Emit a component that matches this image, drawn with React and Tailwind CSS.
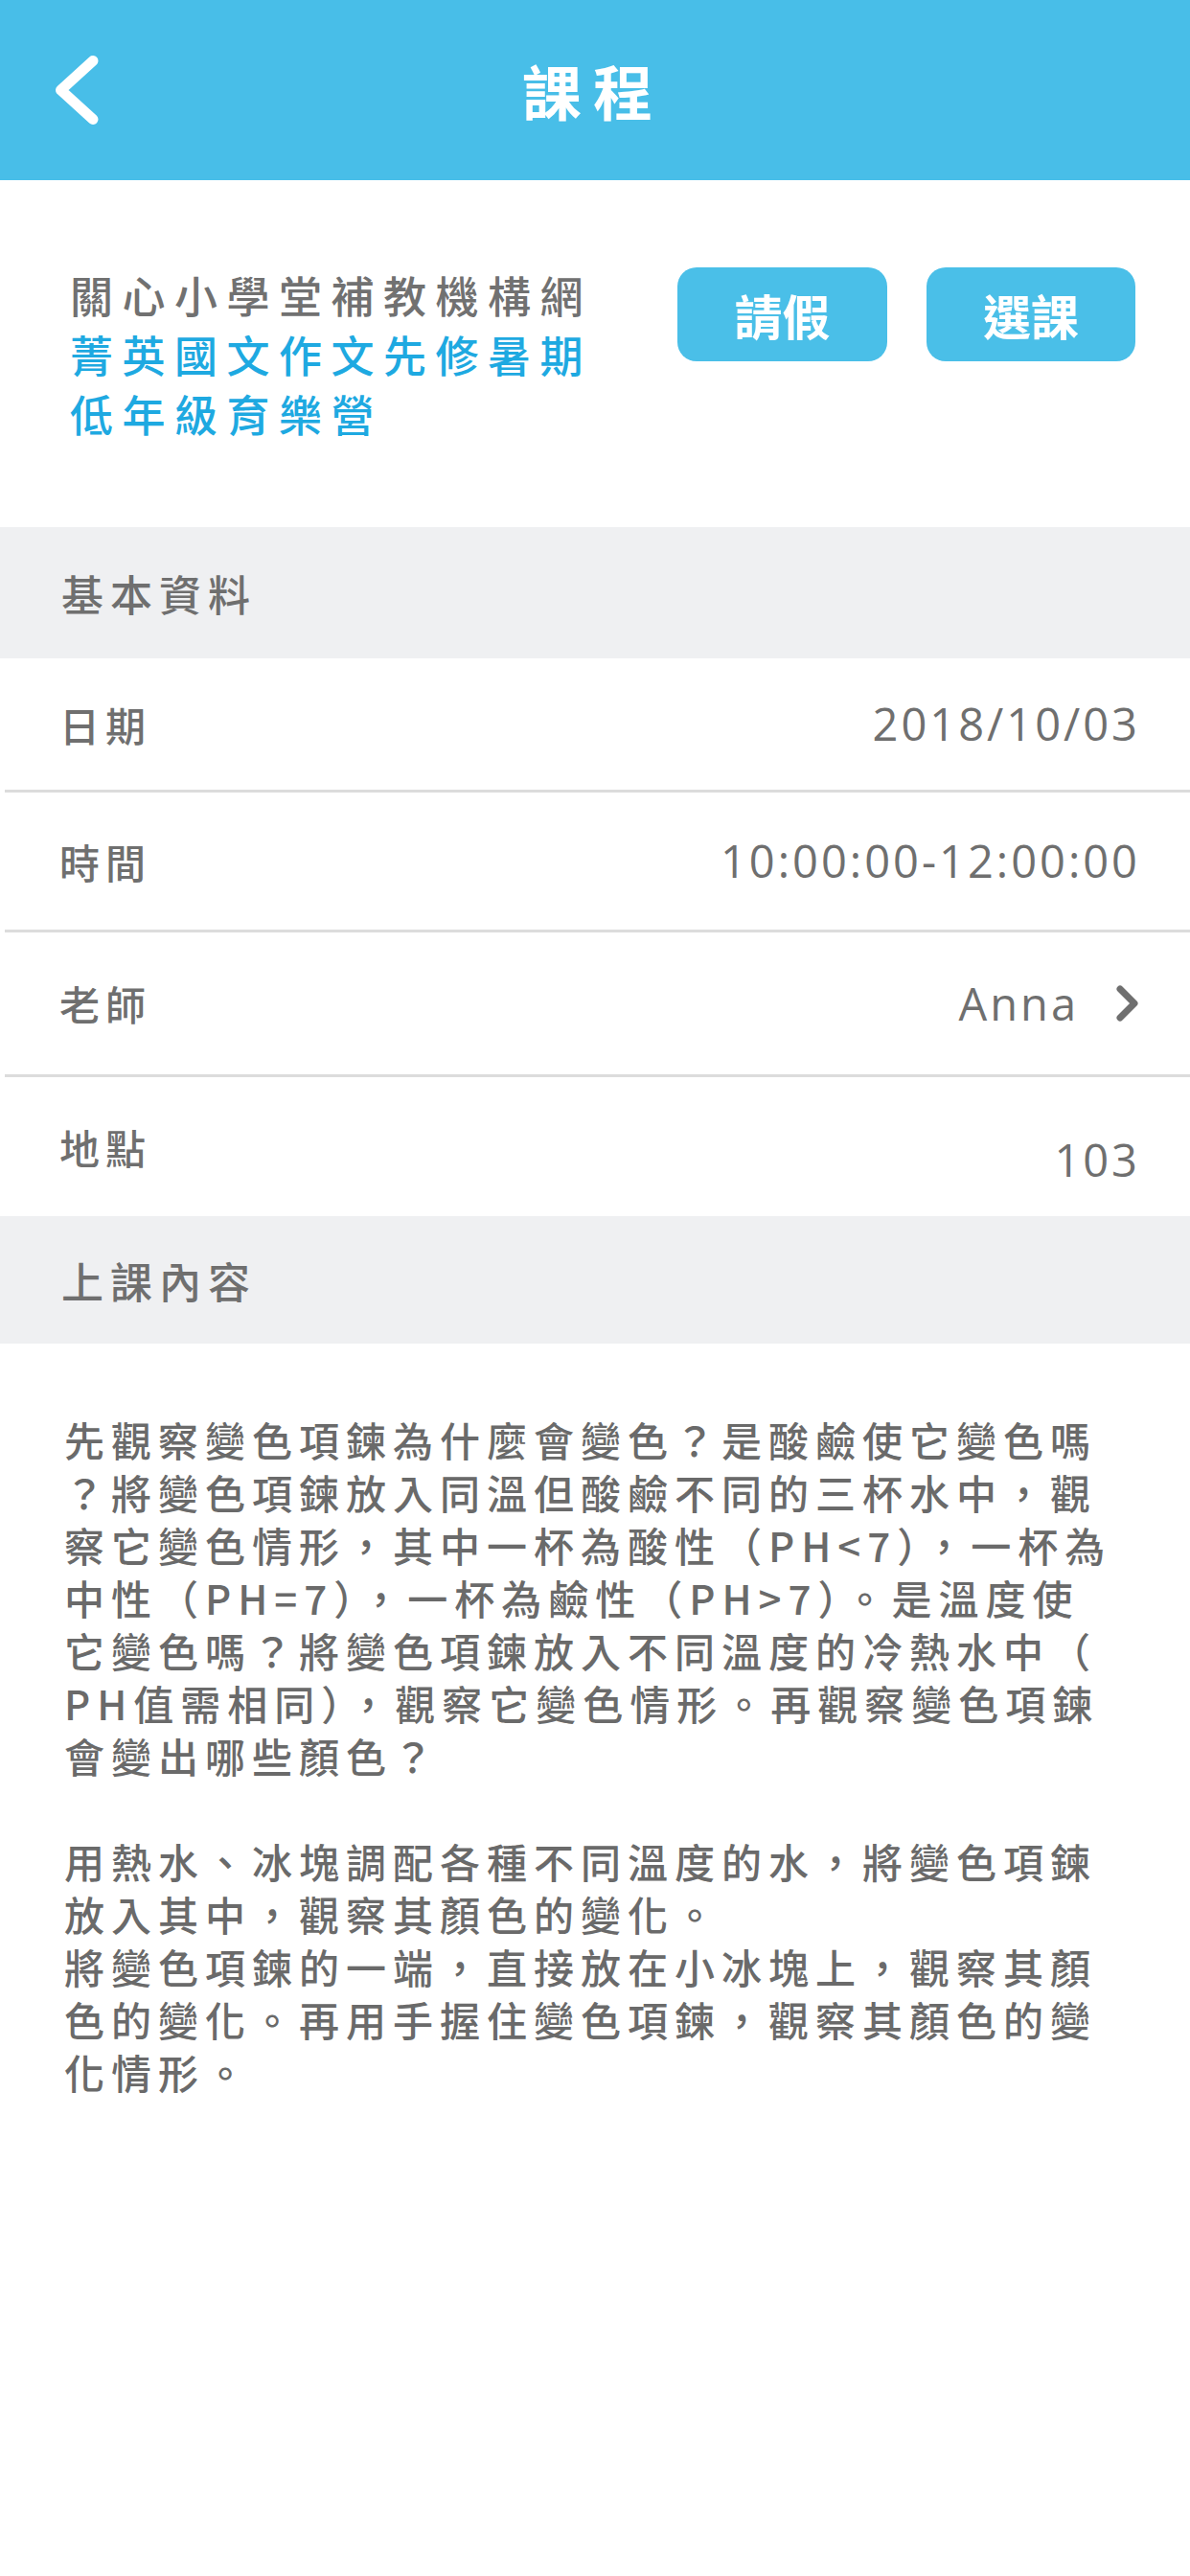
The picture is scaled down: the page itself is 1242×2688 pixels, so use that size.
import React from 'react';

const cjk = "font-['Noto_Sans_CJK_TC','Noto_Sans',sans-serif]";
const latin = "font-['Open_Sans','Noto_Sans_CJK_TC',sans-serif]";

const intro = [
  '先觀察變色項鍊為什麼會變色？是酸鹼使它變色嗎',
  '？將變色項鍊放入同溫但酸鹼不同的三杯水中，觀',
  '察它變色情形，其中一杯為酸性（PH<7），一杯為',
  '中性（PH=7），一杯為鹼性（PH>7）。是溫度使',
  '它變色嗎？將變色項鍊放入不同溫度的冷熱水中（',
  'PH值需相同），觀察它變色情形。再觀察變色項鍊',
  '會變出哪些顏色？',
  '',
  '用熱水、冰塊調配各種不同溫度的水，將變色項鍊',
  '放入其中，觀察其顏色的變化。',
  '將變色項鍊的一端，直接放在小冰塊上，觀察其顏',
  '色的變化。再用手握住變色項鍊，觀察其顏色的變',
  '化情形。',
];

function SectionTitle({ children, h }) {
  return (
    <div className={`flex items-center bg-[#eff0f2] pl-[64px] ${h}`}>
      <span className={`${cjk} text-[44px] tracking-[7px] text-[#6f6f6f] font-medium leading-none`}>{children}</span>
    </div>
  );
}

function Row({ label, children, h, divider = true, valueClass = '' }) {
  return (
    <div className="flex flex-col">
      <div className={`flex items-center justify-between pl-[62px] pr-[52px] ${h}`}>
        <span className={`${cjk} text-[42px] tracking-[6px] text-[#6f6f6f] font-medium leading-none`}>{label}</span>
        <div className={`flex items-center ${valueClass}`}>{children}</div>
      </div>
      {divider && <div className="ml-[5px] h-[3px] bg-[#dcdcdc]" />}
    </div>
  );
}

const valueText = `${latin} text-[47px] tracking-[3px] text-[#6f6f6f] leading-none`;

export default function App() {
  return (
    <div className="w-[1242px] min-h-[2688px] bg-white">
      {/* nav bar */}
      <div className="grid grid-cols-[1fr_auto_1fr] items-center h-[188px] bg-[#48bee8]">
        <div className="pl-[52px] flex items-center">
          <svg width="56" height="80" viewBox="0 0 56 80" fill="none">
            <polyline points="45,9.5 11.5,40 45,70.5" stroke="white" strokeWidth="11" strokeLinecap="round" strokeLinejoin="round" />
          </svg>
        </div>
        <h1 className={`${cjk} text-[62px] tracking-[12px] pr-[4px] text-white font-bold leading-none`}>課程</h1>
        <div />
      </div>

      {/* course heading */}
      <div className="flex justify-between pl-[73px] pr-[57px] pt-[89px] h-[362px]">
        <div className={`${cjk} text-[45px] leading-[62px] tracking-[9.5px] font-medium`}>
          <div className="text-[#717171]">關心小學堂補教機構網</div>
          <div className="text-[#1ea9e1]">菁英國文作文先修暑期</div>
          <div className="text-[#1ea9e1]">低年級育樂營</div>
        </div>
        <div className="flex gap-[41px] pt-[2px]">
          <button className={`${cjk} w-[219px] h-[98px] rounded-[20px] bg-[#4abfe8] text-white text-[50px] font-bold leading-none`}>請假</button>
          <button className={`${cjk} w-[218px] h-[98px] rounded-[20px] bg-[#4abfe8] text-white text-[50px] font-bold leading-none`}>選課</button>
        </div>
      </div>

      <SectionTitle h="h-[137px]">基本資料</SectionTitle>

      <Row label="日期" h="h-[137px]">
        <span className={valueText}>2018/10/03</span>
      </Row>
      <Row label="時間" h="h-[143px]">
        <span className={valueText}>10:00:00-12:00:00</span>
      </Row>
      <Row label="老師" h="h-[148px]">
        <span className={valueText}>Anna</span>
        <svg className="ml-[38px]" width="26" height="40" viewBox="0 0 26 40" fill="none">
          <polyline points="5,5 20,20 5,35" stroke="#6f6f6f" strokeWidth="7" strokeLinecap="round" strokeLinejoin="round" />
        </svg>
      </Row>
      <Row label="地點" h="h-[145px]" divider={false} valueClass="pt-[28px]">
        <span className={valueText}>103</span>
      </Row>

      <SectionTitle h="h-[133px]">上課內容</SectionTitle>

      <div className={`${cjk} pl-[67px] pt-[72px] pb-[200px] text-[42px] leading-[55px] tracking-[7px] text-[#6a6a6a] font-medium`}>
        {intro.map((line, i) => (
          <div key={i} className="whitespace-nowrap h-[55px]">{line}</div>
        ))}
      </div>
    </div>
  );
}
